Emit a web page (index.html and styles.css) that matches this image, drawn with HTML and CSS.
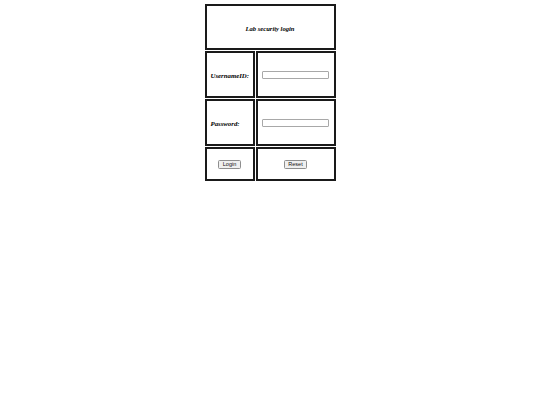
FILE: index.html
```html
<!DOCTYPE html>
<html>
<head>
<meta charset="utf-8">
<title>Lab security login</title>
<link rel="stylesheet" href="styles.css">
</head>
<body>
<form class="login">
<table class="grid">
<tr class="r-title">
<td colspan="2" class="title">Lab security login</td>
</tr>
<tr class="r-field">
<td class="label">UsernameID:</td>
<td class="field"><input type="text" class="inp"></td>
</tr>
<tr class="r-field">
<td class="label">Password:</td>
<td class="field"><input type="password" class="inp"></td>
</tr>
<tr class="r-btn">
<td class="btncell"><button type="button" class="btn">Login</button></td>
<td class="btncell"><button type="reset" class="btn">Reset</button></td>
</tr>
</table>
</form>
</body>
</html>
```

FILE: styles.css
```css
html, body {
  margin: 0;
  padding: 0;
  background: #ffffff;
}
body {
  font-family: "Liberation Serif", "Times New Roman", serif;
}
.login {
  margin: 0;
  padding-top: 3px;
}
.grid {
  margin: 0 auto;
  border-collapse: separate;
  border-spacing: 1px;
}
.grid td {
  border: 2px solid #1a1a1a;
  padding: 0;
  vertical-align: middle;
  box-sizing: border-box;
}
.r-title td { height: 46px; }
.r-field td { height: 47px; }
.r-btn td { height: 34px; }
.label { width: 50px; }
.field { width: 80px; }
.title {
  text-align: center;
  font-weight: bold;
  font-style: italic;
  font-size: 6.6px;
  padding-top: 2px !important;
}
.label {
  font-weight: bold;
  font-style: italic;
  font-size: 6.8px;
  padding-left: 4px !important;
  padding-top: 2px !important;
}
.field {
  padding-left: 4px !important;
}
.inp {
  display: block;
  box-sizing: border-box;
  width: 67px;
  height: 8px;
  margin: 0;
  padding: 0;
  border: 1px solid #a8a8a8;
  border-radius: 1px;
  background: #fff;
  font-size: 5px;
}
.btncell {
  text-align: center;
  padding-top: 0 !important;
}
.btn {
  display: block;
  box-sizing: border-box;
  height: 9px;
  padding: 0 3.5px;
  margin: 0 auto;
  font-family: "Liberation Sans", Arial, sans-serif;
  font-size: 5.5px;
  line-height: 7px;
  color: #111;
  background: #efefef;
  border: 1px solid #8e8e8e;
  border-radius: 1.5px;
}
```
